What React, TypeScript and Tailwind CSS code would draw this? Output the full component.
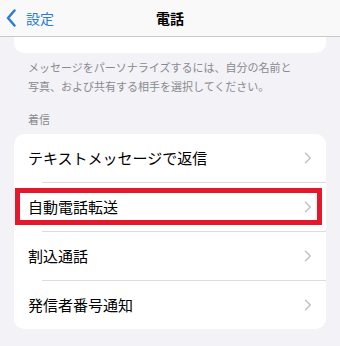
const ROWS = ["テキストメッセージで返信", "自動電話転送", "割込通話", "発信者番号通知"];
const HIGHLIGHT = 1;

function Chevron({ dir, className }: { dir: "left" | "right"; className?: string }) {
  if (dir === "left") {
    return (
      <svg width="11" height="18" viewBox="0 0 11 18" fill="none" className={className}>
        <path d="M8.5 1.5 L2 9 L8.5 16.5" stroke="currentColor" strokeWidth="2.5" strokeLinecap="round" strokeLinejoin="round" />
      </svg>
    );
  }
  return (
    <svg width="8" height="12" viewBox="0 0 8 12" fill="none" className={className}>
      <path d="M1.5 1.2 L6.3 6 L1.5 10.8" stroke="currentColor" strokeWidth="1.6" strokeLinecap="round" strokeLinejoin="round" />
    </svg>
  );
}

export default function App() {
  return (
    <div
      className="w-[340px] h-[346px] overflow-hidden bg-[#f2f2f7]"
      style={{ fontFamily: '"Noto Sans CJK JP", "Noto Sans", sans-serif' }}
    >
      {/* header */}
      <div className="grid grid-cols-[1fr_auto_1fr] items-center h-[37px] bg-[#f9f9f9] border-b border-[#c9c9cc]">
        <div className="flex items-center pl-[6px] text-[#2c7ad8]">
          <Chevron dir="left" />
          <span className="ml-[9px] text-[14px] leading-none">設定</span>
        </div>
        <div className="text-[14px] font-bold text-black leading-none">電話</div>
        <div />
      </div>

      {/* previous card tail */}
      <div className="mx-[14px] h-[16px] bg-white rounded-b-[10px]" />

      <p className="px-[28px] pt-[5px] text-[11px] leading-[19px] text-[#8a8a8e]">
        メッセージをパーソナライズするには、自分の名前と
        <br />
        写真、および共有する相手を選択してください。
      </p>

      <div className="px-[28px] mt-[14px] text-[11px] leading-[19px] text-[#8a8a8e]">着信</div>

      <div className="mx-[14px] mt-[5px] bg-white rounded-[10px] overflow-hidden">
        {ROWS.map((label, i) => (
          <div key={label} className="relative">
            {i > 0 && <div className="ml-[28px] h-px bg-[#dcdce0]" />}
            <div className="flex items-center justify-between h-[48px] pl-[14px] pr-[14px]">
              <span className="text-[15px] text-black">{label}</span>
              <Chevron dir="right" className="text-[#c4c4c7]" />
            </div>
            {i === HIGHLIGHT && (
              <div className="absolute left-px right-[4px] top-[6px] bottom-[6px] border-[5px] border-[#e5172a]" />
            )}
          </div>
        ))}
      </div>
    </div>
  );
}
